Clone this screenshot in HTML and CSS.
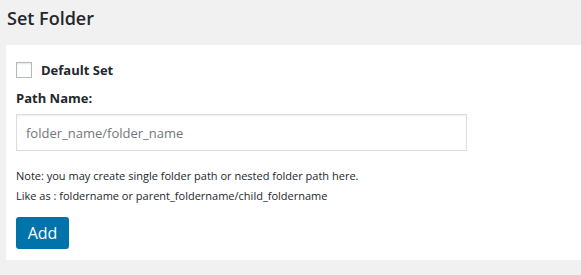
FILE: index.html
```html
<!DOCTYPE html>
<html>
<head>
<meta charset="utf-8">
<link rel="stylesheet" href="styles.css">
</head>
<body>
<div class="wrap">
  <h1 class="title">Set Folder</h1>
  <div class="panel">
    <label class="check-row">
      <span class="checkbox"></span>
      <span class="check-label">Default Set</span>
    </label>
    <div class="field-label">Path Name:</div>
    <input class="path-input" type="text" placeholder="folder_name/folder_name">
    <p class="note">Note: you may create single folder path or nested folder path here.</p>
    <p class="note">Like as : foldername or parent_foldername/child_foldername</p>
    <button class="btn" type="button">Add</button>
  </div>
</div>
</body>
</html>
```
FILE: styles.css
```css
html, body {
  margin: 0;
  padding: 0;
  background: #f1f1f1;
  font-family: "Open Sans", "Noto Sans", sans-serif;
  color: #23282d;
}
.wrap {
  padding: 0 0 0 6px;
}
.title {
  margin: 0;
  padding: 4px 0 0 1px;
  height: 45px;
  box-sizing: border-box;
  font-size: 18px;
  font-weight: 600;
  line-height: 28px;
  color: #23282d;
}
.panel {
  background: #fff;
  padding: 17px 10px 11px 10px;
  height: 215px;
  box-sizing: border-box;
}
.check-row {
  display: flex;
  align-items: center;
  gap: 9px;
  height: 16px;
}
.checkbox {
  width: 14px;
  height: 14px;
  border: 1px solid #b4b9be;
  background: #fff;
  box-shadow: inset 0 1px 2px rgba(0,0,0,0.1);
}
.check-label {
  font-size: 13px;
  font-weight: 700;
  color: #23282d;
}
.field-label {
  margin-top: 11px;
  font-size: 13px;
  font-weight: 700;
  line-height: 18px;
}
.path-input {
  display: block;
  margin-top: 7px;
  width: 451px;
  height: 37px;
  box-sizing: border-box;
  border: 1px solid #ddd;
  box-shadow: inset 0 1px 2px rgba(0,0,0,0.07);
  padding: 0 9px;
  font-family: inherit;
  font-size: 13px;
  color: #32373c;
  outline: none;
}
.path-input::placeholder {
  color: #72777c;
}
.note {
  margin: 0;
  font-size: 11px;
  line-height: 20px;
  color: #23282d;
}
.path-input + .note {
  margin-top: 15px;
}
.btn {
  display: block;
  margin-top: 11px;
  width: 53px;
  height: 32px;
  border: 0;
  border-radius: 3px;
  background: #0073aa;
  color: #fff;
  font-family: inherit;
  font-size: 16px;
  padding: 0;
}
```
